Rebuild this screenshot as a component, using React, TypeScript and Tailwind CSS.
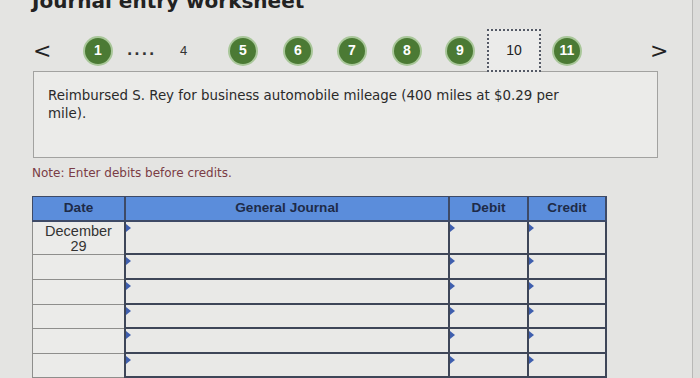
import React from "react";

const steps = [
  { n: "5", ml: "ml-[40px]" },
  { n: "6", ml: "ml-[29px]" },
  { n: "7", ml: "ml-[28px]" },
  { n: "8", ml: "ml-[29px]" },
  { n: "9", ml: "ml-[27px]" },
];

function Dot({ n, className = "" }: { n: string; className?: string }) {
  return (
    <div
      className={`w-[26px] h-[26px] shrink-0 rounded-full bg-[#4b7a34] ring-2 ring-[#a9c79a] flex items-center justify-center text-white font-bold text-[14px] ${className}`}
      style={{ fontFamily: "'Liberation Sans', Arial, sans-serif" }}
    >
      {n}
    </div>
  );
}

function InputCell({ last = false }: { last?: boolean }) {
  return (
    <div className={`relative bg-[#e9e9e7] border-l-2 border-b-2 border-[#3e4658] ${last ? "border-r-2" : ""}`}>
      <span className="absolute left-0 top-[2px] w-0 h-0 border-y-[4px] border-y-transparent border-l-[5px] border-l-[#3f5fae]" />
    </div>
  );
}

export default function App() {
  const rows = [33, 25, 25, 24, 25, 24];
  return (
    <div className="w-[700px] h-[378px] overflow-hidden bg-[#dcdcda]">
      <div
        className="w-[693px] h-full flex flex-col bg-[#e4e4e2] border-r border-[#b8b8b6] text-[#222]"
        style={{ fontFamily: "'DejaVu Sans', Verdana, sans-serif" }}
      >
        <h1 className="ml-[32px] -mt-[11px] text-[20px] leading-[24px] font-bold text-[#222]">
          Journal entry worksheet
        </h1>

        <div className="flex items-center h-[43px] mt-[16px]">
          <span className="ml-[33px] w-[16px] text-[22px] leading-none text-[#222]">&lt;</span>
          <Dot n="1" className="ml-[36px]" />
          <span className="ml-[16px] w-[28px] text-[14px] font-bold tracking-[2px] text-[#333]">....</span>
          <span className="ml-[25px] w-[10px] text-[13px] text-[#333]" style={{ fontFamily: "'Liberation Sans', Arial, sans-serif" }}>
            4
          </span>
          {steps.map((s) => (
            <Dot key={s.n} n={s.n} className={s.ml} />
          ))}
          <div
            className="ml-[14px] w-[54px] h-[43px] shrink-0 border-2 border-dotted border-[#555a66] bg-[#ebebea] flex items-center justify-center text-[14px] text-[#222] relative z-10"
            style={{ fontFamily: "'Liberation Sans', Arial, sans-serif" }}
          >
            10
          </div>
          <Dot n="11" className="ml-[13px]" />
          <span className="ml-[70px] w-[14px] text-[22px] leading-none text-[#222]">&gt;</span>
        </div>

        <div className="ml-[33px] w-[625px] h-[87px] shrink-0 -mt-[1px] border border-[#a2a2a0] bg-[#ebebe9] px-[14px] pt-[15px] text-[13.4px] leading-[18px] text-[#2a2a2a]">
          <p className="w-[540px]">Reimbursed S. Rey for business automobile mileage (400 miles at $0.29 per mile).</p>
        </div>

        <p className="ml-[32px] mt-[7px] text-[12px] leading-[16px] text-[#7a3c45]">
          Note: Enter debits before credits.
        </p>

        <div
          className="ml-[32px] mt-[15px] w-[575px] grid grid-cols-[92px_324px_79px_80px]"
          style={{ fontFamily: "'Liberation Sans', Arial, sans-serif" }}
        >
          {["Date", "General Journal", "Debit", "Credit"].map((h, i) => (
            <div
              key={h}
              className={`h-[26px] bg-[#5b8ddb] border-t border-b-2 border-[#3e4a66] ${i === 0 ? "border-l" : "border-l-2"} ${i === 3 ? "border-r-2" : ""} flex items-center justify-center text-[13.6px] font-bold text-[#1e2b48]`}
            >
              {h}
            </div>
          ))}
          {rows.map((h, r) => (
            <React.Fragment key={r}>
              <div
                className="bg-[#ebebe9] border-l border-b border-[#8e8e8c] flex flex-col items-center text-[14.5px] leading-[15px] text-[#333] pt-[2px]"
                style={{ height: h }}
              >
                {r === 0 && (
                  <>
                    <span>December</span>
                    <span>29</span>
                  </>
                )}
              </div>
              <InputCell />
              <InputCell />
              <InputCell last />
            </React.Fragment>
          ))}
        </div>
      </div>
    </div>
  );
}
